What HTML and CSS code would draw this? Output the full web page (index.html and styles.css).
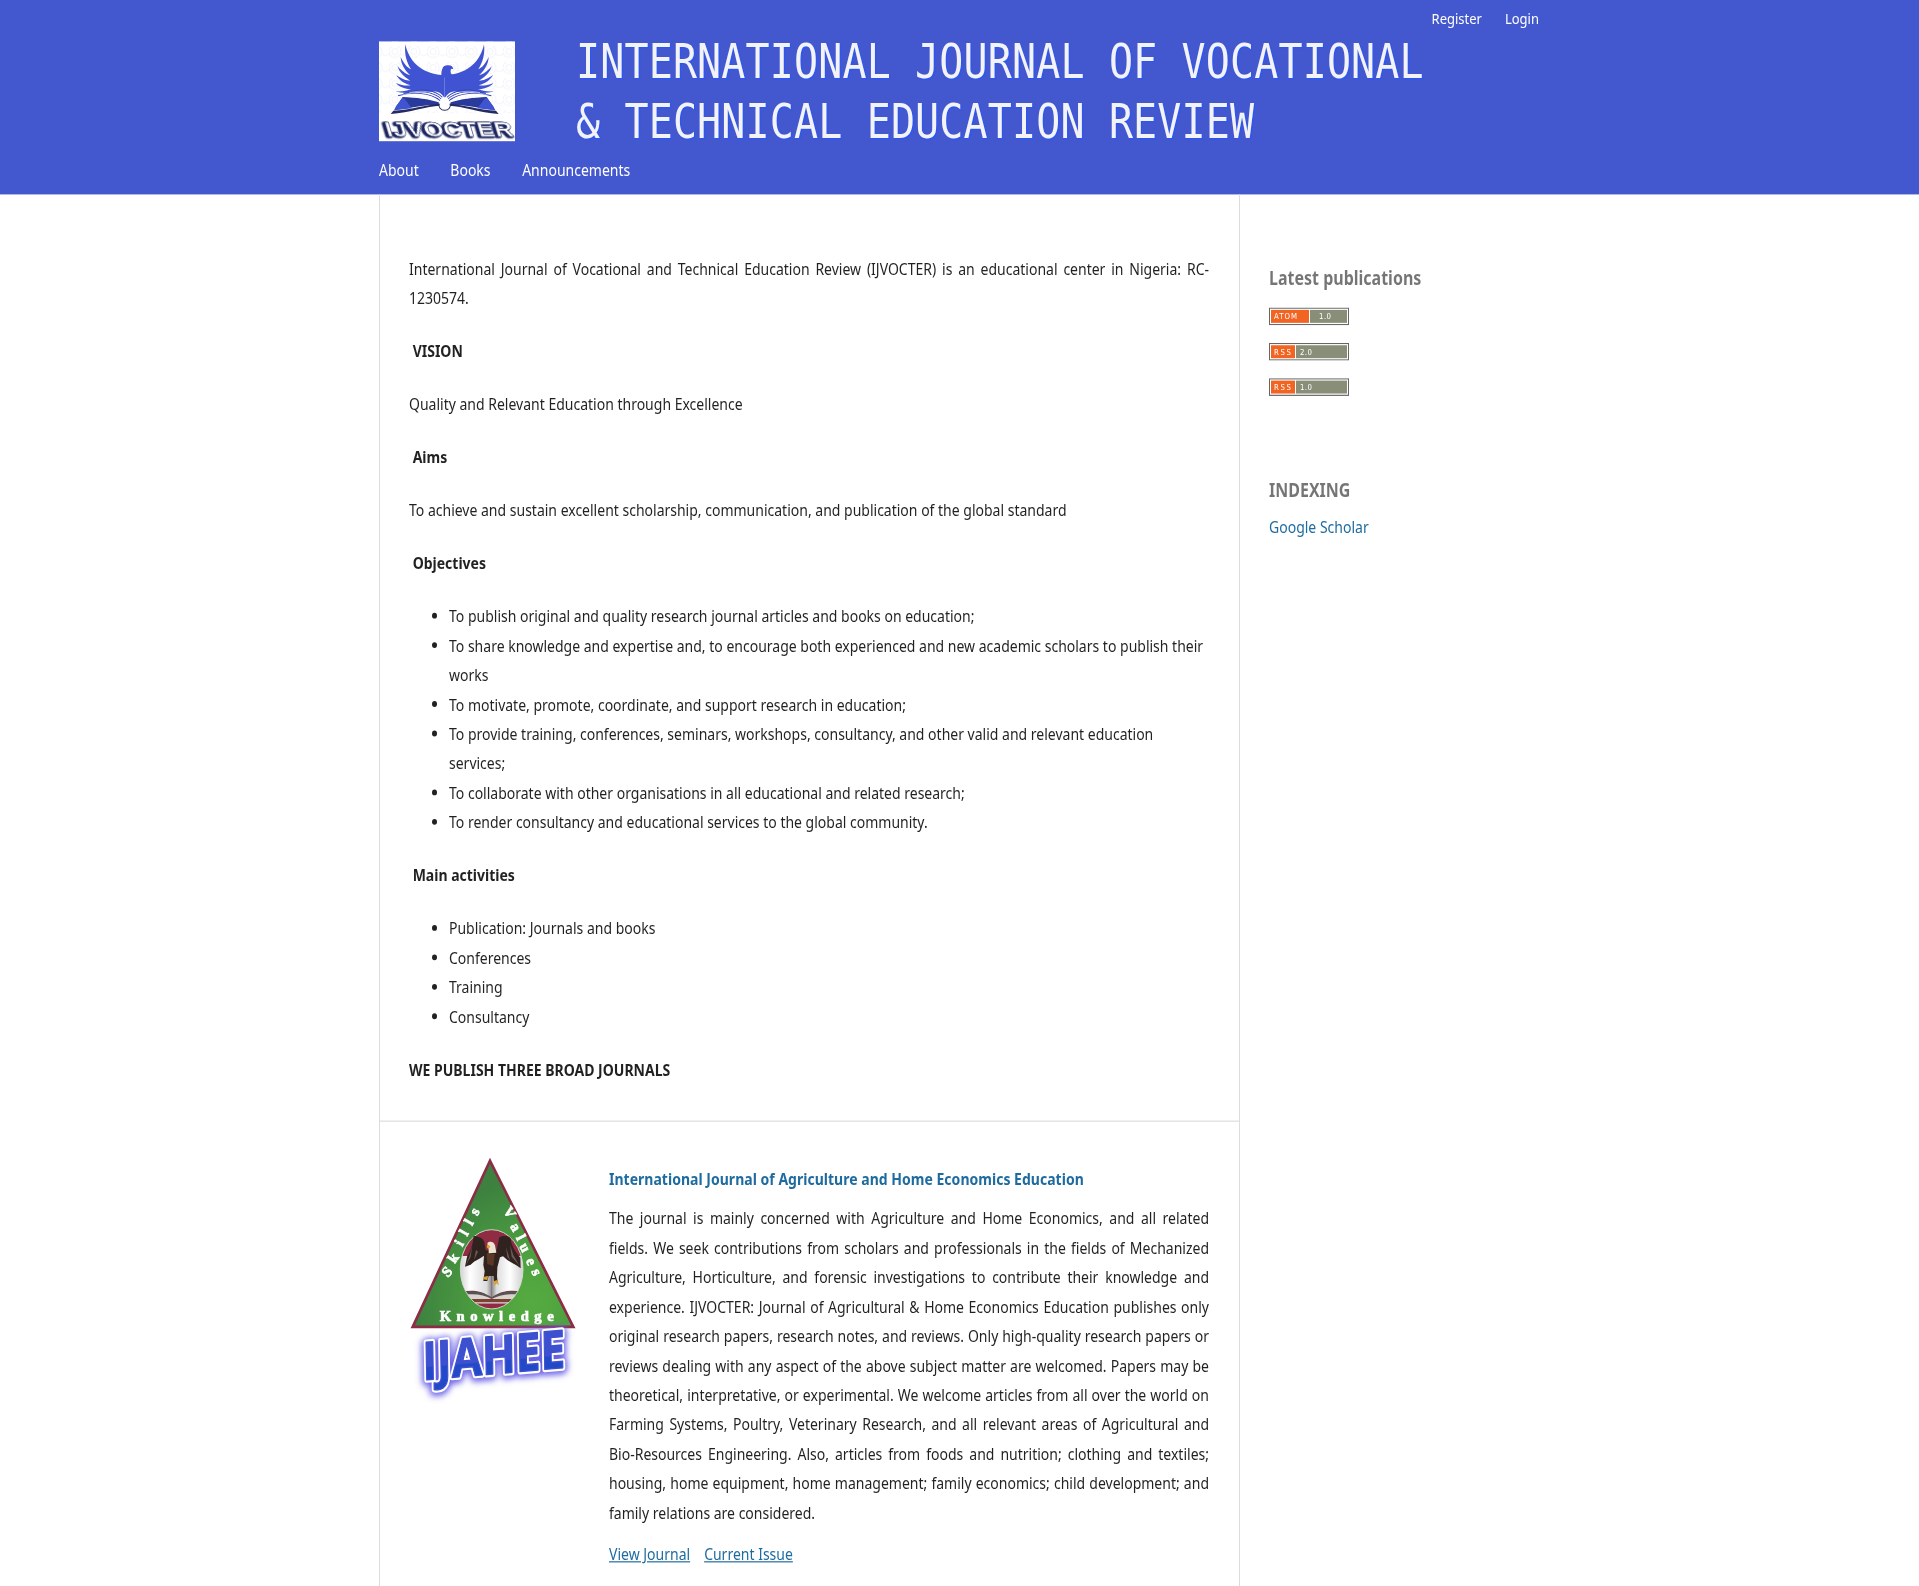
FILE: index.html
```html
<!DOCTYPE html>
<html lang="en">
<head>
<meta charset="utf-8">
<title>International Journal of Vocational &amp; Technical Education Review</title>
<link rel="stylesheet" href="styles.css">
</head>
<body>
<div class="page">
  <header class="header">
    <div class="header-inner">
      <nav class="user-nav"><a>Register</a><a>Login</a></nav>
      <div class="brand">
        <svg class="logo" viewBox="27 33 408 300" preserveAspectRatio="none">
          <defs>
            <pattern id="rings" width="57" height="48" patternUnits="userSpaceOnUse">
              <circle cx="18" cy="16" r="18" fill="none" stroke="#f3f4fb" stroke-width="3"/>
              <circle cx="18" cy="16" r="9" fill="none" stroke="#f3f4fb" stroke-width="3"/>
              <path d="M36 22C44 30 50 30 57 22" fill="none" stroke="#f3f4fb" stroke-width="3"/>
            </pattern>
          </defs>
          <rect x="27" y="33" width="408" height="300" fill="#fff"/>
          <rect x="27" y="33" width="408" height="215" fill="url(#rings)"/>
          <g>
            <path fill="#4053d2" d="M106 42C116 90 150 128 214 134L224 136V205C205 170 180 190 145 186C118 188 95 190 77 183C98 184 112 181 124 177C105 176 88 170 78 158C96 166 110 167 122 165C101 159 86 148 79 134C96 146 108 151 121 151C101 139 87 124 83 108C97 124 110 132 121 135C102 118 93 100 92 80C101 99 112 112 123 117C108 94 103 68 106 42Z"/>
            <path fill="#2a3a9c" d="M78 229L98 200C140 202 176 206 206 216L208 226C165 222 130 232 72 240Z"/>
            <path fill="#4053d2" d="M78 228L98 202C103 202 110 214 126 234L74 240Z"/>
            <path fill="none" stroke="#3447b8" stroke-width="3" d="M84 196C128 184 180 186 211 211M100 190C142 178 188 182 214 206M122 184C156 174 196 180 217 201"/>
            <path fill="none" stroke="#fff" stroke-width="1.5" d="M84 200C128 189 180 190 209 214M98 193C142 182 188 186 212 209M118 187C156 178 196 184 216 204"/>
            <path fill="#232b60" d="M62 251L70 241C120 240 170 222 208 221L210 226C170 228 120 246 62 251Z"/>
          </g>
          <g transform="matrix(-1 0 0 1 448 0)">
            <path fill="#4053d2" d="M106 42C116 90 150 128 214 134L224 136V205C205 170 180 190 145 186C118 188 95 190 77 183C98 184 112 181 124 177C105 176 88 170 78 158C96 166 110 167 122 165C101 159 86 148 79 134C96 146 108 151 121 151C101 139 87 124 83 108C97 124 110 132 121 135C102 118 93 100 92 80C101 99 112 112 123 117C108 94 103 68 106 42Z"/>
            <path fill="#2a3a9c" d="M78 229L98 200C140 202 176 206 206 216L208 226C165 222 130 232 72 240Z"/>
            <path fill="#4053d2" d="M78 228L98 202C103 202 110 214 126 234L74 240Z"/>
            <path fill="none" stroke="#3447b8" stroke-width="3" d="M84 196C128 184 180 186 211 211M100 190C142 178 188 182 214 206M122 184C156 174 196 180 217 201"/>
            <path fill="none" stroke="#fff" stroke-width="1.5" d="M84 200C128 189 180 190 209 214M98 193C142 182 188 186 212 209M118 187C156 178 196 184 216 204"/>
            <path fill="#232b60" d="M62 251L70 241C120 240 170 222 208 221L210 226C170 228 120 246 62 251Z"/>
          </g>
          <path fill="#4053d2" d="M214 136C214 120 217 105 232 105C243 104 249 108 250 117C244 113 241 117 242 125C242 134 250 134 260 133L240 150Z"/>
          <path fill="#fff" stroke="#232b60" stroke-width="3" d="M208 220A17 15 0 1 0 240 220"/>
          <circle cx="224" cy="215" r="14" fill="#fff"/>
          <text class="word" transform="matrix(1 0 .3 1 -95 0)" x="52" y="318" textLength="382" lengthAdjust="spacingAndGlyphs">IJVOCTER</text>
        </svg>
        <h1 class="title">INTERNATIONAL JOURNAL OF VOCATIONAL<br>&amp; TECHNICAL EDUCATION REVIEW</h1>
      </div>
      <nav class="main-nav"><a>About</a><a>Books</a><a>Announcements</a></nav>
    </div>
  </header>
  <div class="content">
    <main class="main">
      <section class="about">
        <p class="justify">International Journal of Vocational and Technical Education Review (IJVOCTER) is an educational center in Nigeria: RC-1230574.</p>
        <p><b>&nbsp;VISION</b></p>
        <p>Quality and Relevant Education through Excellence</p>
        <p><b>&nbsp;Aims</b></p>
        <p>To achieve and sustain excellent scholarship, communication, and publication of the global standard</p>
        <p><b>&nbsp;Objectives</b></p>
        <ul>
          <li>To publish original and quality research journal articles and books on education;</li>
          <li>To share knowledge and expertise and, to encourage both experienced and new academic scholars to publish their works</li>
          <li>To motivate, promote, coordinate, and support research in education;</li>
          <li>To provide training, conferences, seminars, workshops, consultancy, and other valid and relevant education services;</li>
          <li>To collaborate with other organisations in all educational and related research;</li>
          <li>To render consultancy and educational services to the global community.</li>
        </ul>
        <p><b>&nbsp;Main activities</b></p>
        <ul>
          <li>Publication: Journals and books</li>
          <li>Conferences</li>
          <li>Training</li>
          <li>Consultancy</li>
        </ul>
        <p><b>WE PUBLISH THREE BROAD JOURNALS</b></p>
      </section>
      <section class="journal">
        <svg class="thumb" viewBox="27 51 510 729" preserveAspectRatio="none">
          <defs>
            <radialGradient id="green" cx=".75" cy=".85" r=".75">
              <stop offset="0" stop-color="#55ab40"/><stop offset=".4" stop-color="#4da03f"/><stop offset="1" stop-color="#3d8040"/>
            </radialGradient>
            <linearGradient id="pageL" x1="0" x2="1"><stop offset="0" stop-color="#c9c9c9"/><stop offset=".35" stop-color="#fff"/><stop offset=".85" stop-color="#dcdcdc"/><stop offset="1" stop-color="#888"/></linearGradient>
            <linearGradient id="pageR" x1="1" x2="0"><stop offset="0" stop-color="#c9c9c9"/><stop offset=".45" stop-color="#fff"/><stop offset=".85" stop-color="#ddd"/><stop offset="1" stop-color="#888"/></linearGradient>
            <linearGradient id="blue" x1="0" y1="0" x2="0" y2="1"><stop offset=".6" stop-color="#3d50d0"/><stop offset=".62" stop-color="#2249c8"/></linearGradient>
            <clipPath id="disc"><ellipse cx="275" cy="388" rx="94" ry="119"/></clipPath>
            <filter id="glow" x="-20%" y="-30%" width="140%" height="160%"><feGaussianBlur stdDeviation="9"/></filter>
          </defs>
          <path d="M270 62L520 561H38Z" fill="url(#green)" stroke="#8d2c46" stroke-width="8"/>
          <g clip-path="url(#disc)">
            <rect x="175" y="265" width="200" height="250" fill="#8f2b43"/>
            <path fill="url(#pageL)" d="M175 348H275V475C250 452 215 448 185 456H175Z"/>
            <path fill="url(#pageR)" d="M275 348H375V456H365C335 448 300 452 275 475Z"/>
            <path fill="#555" d="M190 456C225 449 255 458 275 472C295 458 325 449 360 456V466C325 460 298 466 275 478C252 466 225 460 190 466Z"/>
            <path fill="#d9d4cf" d="M195 464C230 460 255 466 275 477C295 466 325 460 356 464V477H195Z"/>
            <path fill="#7a4330" d="M190 477H262L275 481L288 477H360V486H190Z"/>
            <path fill="#ddd" d="M200 487H350V491H200Z"/>
          </g>
          <ellipse cx="275" cy="388" rx="94" ry="119" fill="none" stroke="#dceadb" stroke-width="2.5"/>
          <path fill="#30221f" d="M221 288C238 290 250 294 253 307L257 331L289 334L298 292C310 285 324 287 331 294C334 315 344 335 361 353L362 385L349 376L338 370L322 360L309 349L300 352L292 382L291 408L293 429L282 429L281 408L266 408L262 423H250L254 394L250 375L252 347L238 356L222 365L212 374L195 380L201 350C212 335 219 312 221 288Z"/>
          <path fill="#6b5b52" d="M217 318L212 350L197 378L207 352ZM330 315L340 345L359 378L335 350ZM228 330L222 360L234 335ZM318 322L322 350L331 362Z"/>
          <path fill="#5b3826" d="M260 340L284 342L280 378L262 372Z"/>
          <path fill="#eee3d0" d="M262 310C268 303 281 304 285 316L289 338L266 340L266 325Z"/>
          <path fill="#d8a332" d="M262 313L271 319L266 328L260 322ZM250 411L264 408L262 420L249 418ZM280 424L292 420L297 436L289 430L284 438Z"/>
          <g class="badge-text">
            <text transform="translate(143 414) rotate(-48)">S</text>
            <text transform="translate(164 372) rotate(-55)">k</text>
            <text transform="translate(187 322) rotate(-60)">i</text>
            <text transform="translate(201 290) rotate(-60)">l</text>
            <text transform="translate(216 259) rotate(-60)">l</text>
            <text transform="translate(232 229) rotate(-60)">s</text>
            <text transform="translate(308 212) rotate(56)">V</text>
            <text transform="translate(329 259) rotate(60)">a</text>
            <text transform="translate(347 293) rotate(63)">l</text>
            <text transform="translate(357 318) rotate(63)">u</text>
            <text transform="translate(377 361) rotate(68)">e</text>
            <text transform="translate(394 394) rotate(68)">s</text>
            <text x="119" y="543" textLength="342" lengthAdjust="spacing">Knowledge</text>
          </g>
          <g transform="translate(78 720) rotate(-5) skewX(-4)">
            <text class="ij-glow" filter="url(#glow)" x="-10" y="3" textLength="430" lengthAdjust="spacingAndGlyphs">IJAHEE</text>
            <text class="ij-outline" x="-10" y="0" textLength="430" lengthAdjust="spacingAndGlyphs">IJAHEE</text>
            <text class="ij" x="-10" y="0" textLength="430" lengthAdjust="spacingAndGlyphs">IJAHEE</text>
          </g>
        </svg>
        <div class="journal-body">
          <h3><a>International Journal of Agriculture and Home Economics Education</a></h3>
          <p class="justify">The journal is mainly concerned with Agriculture and Home Economics, and all related fields. We seek contributions from scholars and professionals in the fields of Mechanized Agriculture, Horticulture, and forensic investigations to contribute their knowledge and experience. IJVOCTER: Journal of Agricultural &amp; Home Economics Education publishes only original research papers, research notes, and reviews. Only high-quality research papers or reviews dealing with any aspect of the above subject matter are welcomed. Papers may be theoretical, interpretative, or experimental. We welcome articles from all over the world on Farming Systems, Poultry, Veterinary Research, and all relevant areas of Agricultural and Bio-Resources Engineering. Also, articles from foods and nutrition; clothing and textiles; housing, home equipment, home management; family economics; child development; and family relations are considered.</p>
          <div class="links"><a>View Journal</a><a>Current Issue</a></div>
        </div>
      </section>
    </main>
    <aside class="sidebar">
      <section class="block feeds">
        <h2>Latest publications</h2>
        <svg viewBox="0 0 80 15"><rect width="80" height="15" fill="#666"/><rect x="1" y="1" width="78" height="13" fill="#fff"/><rect x="2" y="2" width="38" height="11" fill="#f16422"/><rect x="41" y="2" width="37" height="11" fill="#898e79"/><text x="5" y="10" textLength="23">ATOM</text><text x="50" y="10" textLength="12">1.0</text></svg>
        <svg viewBox="0 0 80 15"><rect width="80" height="15" fill="#666"/><rect x="1" y="1" width="78" height="13" fill="#fff"/><rect x="2" y="2" width="24" height="11" fill="#f16422"/><rect x="27" y="2" width="51" height="11" fill="#898e79"/><text x="5" y="10" textLength="17">RSS</text><text x="31" y="10" textLength="12">2.0</text></svg>
        <svg viewBox="0 0 80 15"><rect width="80" height="15" fill="#666"/><rect x="1" y="1" width="78" height="13" fill="#fff"/><rect x="2" y="2" width="24" height="11" fill="#f16422"/><rect x="27" y="2" width="51" height="11" fill="#898e79"/><text x="5" y="10" textLength="17">RSS</text><text x="31" y="10" textLength="12">1.0</text></svg>
      </section>
      <section class="block">
        <h2>INDEXING</h2>
        <a>Google Scholar</a>
      </section>
    </aside>
  </div>
</div>
</body>
</html>
```
FILE: styles.css
```css
* { box-sizing: border-box; }
html { overflow: hidden; background: #fff; }
body { margin: 0; height: 1586px; overflow: hidden; }

.page {
  width: 1919px;
  height: 1346px;
  overflow: hidden;
  transform: scaleY(1.1783);
  transform-origin: 0 0;
  background: #fff;
  color: rgba(0, 0, 0, .87);
  font: 14px/25px "Noto Sans", sans-serif;
}
a { color: #1e6ba0; }
h1, h2, h3, p, ul { margin: 0; }

.header { height: 165px; background: #4357cf; }
.header-inner { width: 1160px; margin-left: 379px; }
.header a { color: #fff; }
.user-nav { display: flex; justify-content: flex-end; gap: 23px; height: 35px; padding-top: 2.5px; font-size: 13px; }
.brand { display: flex; height: 96.2px; }
.logo { width: 136px; height: 85px; margin-right: 61px; }
.title {
  margin-top: -8px;
  color: #f3f3f6;
  font: 400 40px/50.5px "DejaVu Sans Mono", monospace;
  letter-spacing: .14px;
  text-shadow: 1px 1px 1px #2457ff;
  white-space: nowrap;
}
.main-nav { display: flex; gap: 31.6px; }
.word {
  fill: #fff;
  stroke: #1c2560;
  stroke-width: 1.5;
  font: bold 62px "Liberation Sans", sans-serif;
  filter: drop-shadow(-3px 1px 0 #1c2560) drop-shadow(-3px 1px 0 #1c2560) drop-shadow(-4px 1px 0 #1c2560);
}

.content { display: flex; width: 1160px; height: 1181px; margin-left: 379px; }
.main { width: 861px; border: solid #ddd; border-width: 0 1px; }
.about { padding: 49.7px 30px 31.3px 29px; }
.about > * + * { margin-top: 20px; }
.about ul { padding-left: 40px; }
.justify { text-align: justify; }

.journal { display: flex; gap: 30px; padding: 30px 30px 30px 29px; border-top: 1px solid #ddd; }
.thumb { flex: none; width: 170px; height: 206px; overflow: visible; }
.journal-body { padding-top: 9.4px; }
.journal h3 { font-size: 14px; line-height: 20px; margin-bottom: 9.3px; letter-spacing: .02px; }
.links { display: flex; gap: 14px; margin-top: 10px; }
.links a { text-decoration: underline; }
.badge-text { fill: #fff; stroke: #fff; stroke-width: 2; font: bold 44px "Liberation Serif", serif; }
.ij, .ij-outline, .ij-glow { font: bold 158px "Open Sans", sans-serif; stroke-linejoin: round; }
.ij-glow { fill: #6a62e6; stroke: #6a62e6; stroke-width: 32; }
.ij-outline { fill: #fff; stroke: #fff; stroke-width: 17; }
.ij { fill: url(#blue); stroke: #3d50d0; stroke-width: 4; }

.sidebar { padding: 61px 0 0 29px; }
.block h2 { color: rgba(0, 0, 0, .54); font-size: 16px; line-height: 20px; }
.feeds { display: flex; flex-direction: column; gap: 15px; height: 180px; }
.feeds svg { width: 80px; height: 15px; }
.feeds text { fill: #fff; font: 7px "DejaVu Sans", sans-serif; }
.block > a { display: block; margin-top: 8px; }
```
